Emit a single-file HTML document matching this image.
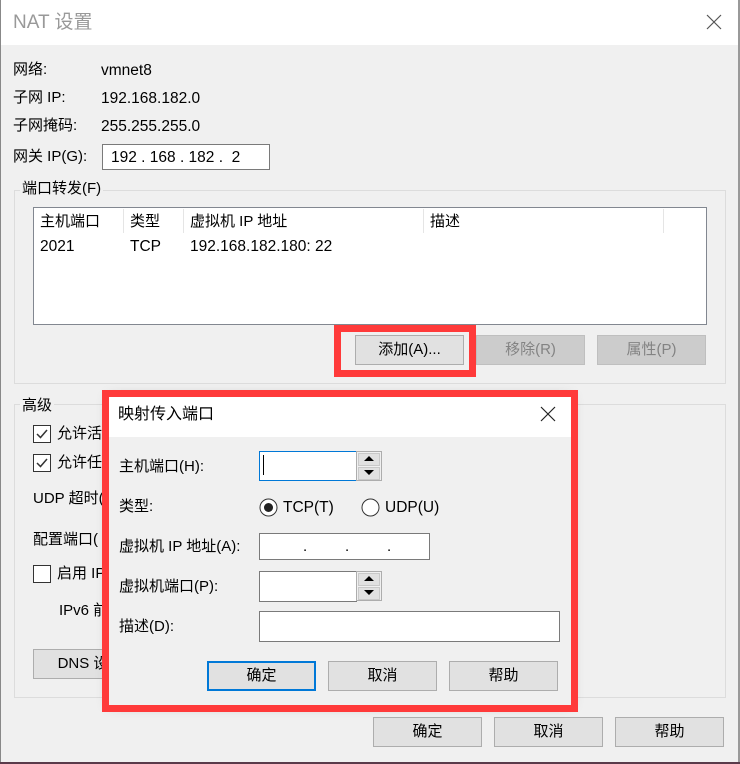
<!DOCTYPE html>
<html><head><meta charset="utf-8"><style>
*{box-sizing:border-box;margin:0;padding:0}
body{width:740px;height:764px;background:#f0f0f0;font-family:"Liberation Sans","Noto Sans CJK SC",sans-serif;font-size:15px;color:#000;position:relative;overflow:hidden}
.a{position:absolute;white-space:nowrap;line-height:20px}
.btn{position:absolute;background:#e1e1e1;border:1px solid #adadad;text-align:center;line-height:28px;height:30px;width:109px}
.dis{background:#cccccc;border-color:#bfbfbf;color:#838383}
.inp{position:absolute;background:#fff;border:1px solid #7a7a7a}
.grp{position:absolute;border:1px solid #dcdcdc}
.cb{position:absolute;width:18px;height:18px;border:1px solid #333;background:#fff}
.red{position:absolute;border:7px solid #ff3a3a}
.spin{position:absolute;width:26px;height:30px;border:1px solid #adadad;background:#f0f0f0}
.spin div{position:absolute;left:1px;width:22px;height:13px;background:#e1e1e1;border:1px solid #c9c9c9}
.l{font-size:15.5px}
</style></head><body>
<div class="a" style="left:0;top:0;width:740px;height:45px;background:#fff"></div>
<div class="a" style="left:0;top:0;width:1px;height:764px;background:#888"></div>
<div class="a" style="left:738px;top:0;width:2px;height:764px;background:#999"></div>
<div class="a" style="left:0;top:762px;width:740px;height:2px;background:#5a3a4a"></div>
<div class="a" style="left:13px;top:13px;font-size:19px;color:#999">NAT 设置</div>
<svg class="a" style="left:706px;top:14px" width="16" height="16"><path d="M1 1L15 15M15 1L1 15" stroke="#555" stroke-width="1.2"/></svg>

<div class="a" style="left:13px;top:60px">网络:</div><div class="a l" style="left:101px;top:61px">vmnet8</div>
<div class="a" style="left:13px;top:88px">子网 IP:</div><div class="a l" style="left:101px;top:89px">192.168.182.0</div>
<div class="a" style="left:13px;top:116px">子网掩码:</div><div class="a l" style="left:101px;top:117px">255.255.255.0</div>
<div class="a" style="left:13px;top:147px">网关 IP(G):</div>
<div class="inp" style="left:102px;top:144px;width:168px;height:26px"></div>
<div class="a l" style="left:111px;top:148px">192 . 168 . 182 .&nbsp;&nbsp;2</div>

<div class="grp" style="left:14px;top:190px;width:712px;height:194px"></div>
<div class="a" style="left:20px;top:179px;background:#f0f0f0;padding:0 2px">端口转发(F)</div>
<div class="inp" style="left:33px;top:207px;width:674px;height:118px;border-color:#828790"></div>
<div class="a" style="left:40px;top:212px">主机端口</div>
<div class="a" style="left:123px;top:209px;width:1px;height:24px;background:#e5e5e5"></div>
<div class="a" style="left:130px;top:212px">类型</div>
<div class="a" style="left:183px;top:209px;width:1px;height:24px;background:#e5e5e5"></div>
<div class="a" style="left:190px;top:212px">虚拟机 IP 地址</div>
<div class="a" style="left:423px;top:209px;width:1px;height:24px;background:#e5e5e5"></div>
<div class="a" style="left:430px;top:212px">描述</div>
<div class="a" style="left:663px;top:209px;width:1px;height:24px;background:#e5e5e5"></div>
<div class="a l" style="left:40px;top:237px">2021</div>
<div class="a l" style="left:130px;top:237px">TCP</div>
<div class="a l" style="left:190px;top:237px">192.168.182.180: 22</div>
<div class="btn" style="left:355px;top:335px">添加(A)...</div>
<div class="btn dis" style="left:476px;top:335px">移除(R)</div>
<div class="btn dis" style="left:597px;top:335px">属性(P)</div>
<div class="red" style="left:334px;top:325px;width:142px;height:52px"></div>

<div class="grp" style="left:14px;top:404px;width:712px;height:294px"></div>
<div class="a" style="left:20px;top:396px;background:#f0f0f0;padding:0 2px">高级</div>
<div class="cb" style="left:33px;top:425px"></div><svg class="a" style="left:35px;top:427px" width="14" height="14"><path d="M2 7L5.5 10.5L12 3" stroke="#333" stroke-width="1.5" fill="none"/></svg>
<div class="a" style="left:57px;top:424px">允许活</div>
<div class="cb" style="left:33px;top:454px"></div><svg class="a" style="left:35px;top:456px" width="14" height="14"><path d="M2 7L5.5 10.5L12 3" stroke="#333" stroke-width="1.5" fill="none"/></svg>
<div class="a" style="left:57px;top:453px">允许任</div>
<div class="a" style="left:33px;top:489px">UDP 超时(</div>
<div class="a" style="left:33px;top:530px">配置端口(</div>
<div class="cb" style="left:33px;top:565px"></div>
<div class="a" style="left:57px;top:564px">启用 IP</div>
<div class="a" style="left:59px;top:601px">IPv6 前</div>
<div class="btn" style="left:33px;top:649px;width:100px">DNS 设</div>

<div class="btn" style="left:373px;top:717px">确定</div>
<div class="btn" style="left:494px;top:717px">取消</div>
<div class="btn" style="left:615px;top:717px">帮助</div>

<div class="a" style="left:109px;top:397px;width:462px;height:308px;background:#f0f0f0;box-shadow:0 0 12px rgba(0,0,0,.25)"></div>
<div class="a" style="left:109px;top:397px;width:462px;height:40px;background:#fff"></div>
<div class="a" style="left:118px;top:405px;font-size:16px">映射传入端口</div>
<svg class="a" style="left:540px;top:406px" width="16" height="16"><path d="M1 1L15 15M15 1L1 15" stroke="#222" stroke-width="1.2"/></svg>
<div class="a" style="left:119px;top:457px">主机端口(H):</div>
<div class="inp" style="left:259px;top:451px;width:98px;height:30px;border-color:#0078d7"></div>
<div class="a" style="left:263px;top:455px;width:1px;height:20px;background:#000"></div>
<div class="spin" style="left:356px;top:451px"><div style="top:1px"></div><div style="top:15px"></div></div>
<svg class="a" style="left:362px;top:454px" width="14" height="24"><path d="M2 7H12L7 2Z M2 16H12L7 21Z" fill="#000"/></svg>
<div class="a" style="left:119px;top:497px">类型:</div>
<svg class="a" style="left:259px;top:498px" width="20" height="20"><circle cx="9.5" cy="9.5" r="8.5" fill="#fff" stroke="#333"/><circle cx="9.5" cy="9.5" r="4.5" fill="#222"/></svg>
<div class="a l" style="left:283px;top:498px">TCP(T)</div>
<svg class="a" style="left:361px;top:498px" width="20" height="20"><circle cx="9.5" cy="9.5" r="8.5" fill="#fff" stroke="#333"/></svg>
<div class="a l" style="left:385px;top:498px">UDP(U)</div>
<div class="a" style="left:119px;top:537px">虚拟机 IP 地址(A):</div>
<div class="inp" style="left:259px;top:533px;width:171px;height:27px"></div>
<div class="a" style="left:303px;top:537px">.</div><div class="a" style="left:345px;top:537px">.</div><div class="a" style="left:387px;top:537px">.</div>
<div class="a" style="left:119px;top:577px">虚拟机端口(P):</div>
<div class="inp" style="left:259px;top:571px;width:98px;height:31px"></div>
<div class="spin" style="left:356px;top:571px"><div style="top:1px"></div><div style="top:15px"></div></div>
<svg class="a" style="left:362px;top:574px" width="14" height="24"><path d="M2 7H12L7 2Z M2 16H12L7 21Z" fill="#000"/></svg>
<div class="a" style="left:119px;top:617px">描述(D):</div>
<div class="inp" style="left:259px;top:611px;width:301px;height:31px"></div>
<div class="btn" style="left:207px;top:661px;border:2px solid #0078d7;line-height:26px">确定</div>
<div class="btn" style="left:328px;top:661px">取消</div>
<div class="btn" style="left:449px;top:661px">帮助</div>
<div class="red" style="left:102px;top:390px;width:476px;height:322px"></div>
</body></html>
